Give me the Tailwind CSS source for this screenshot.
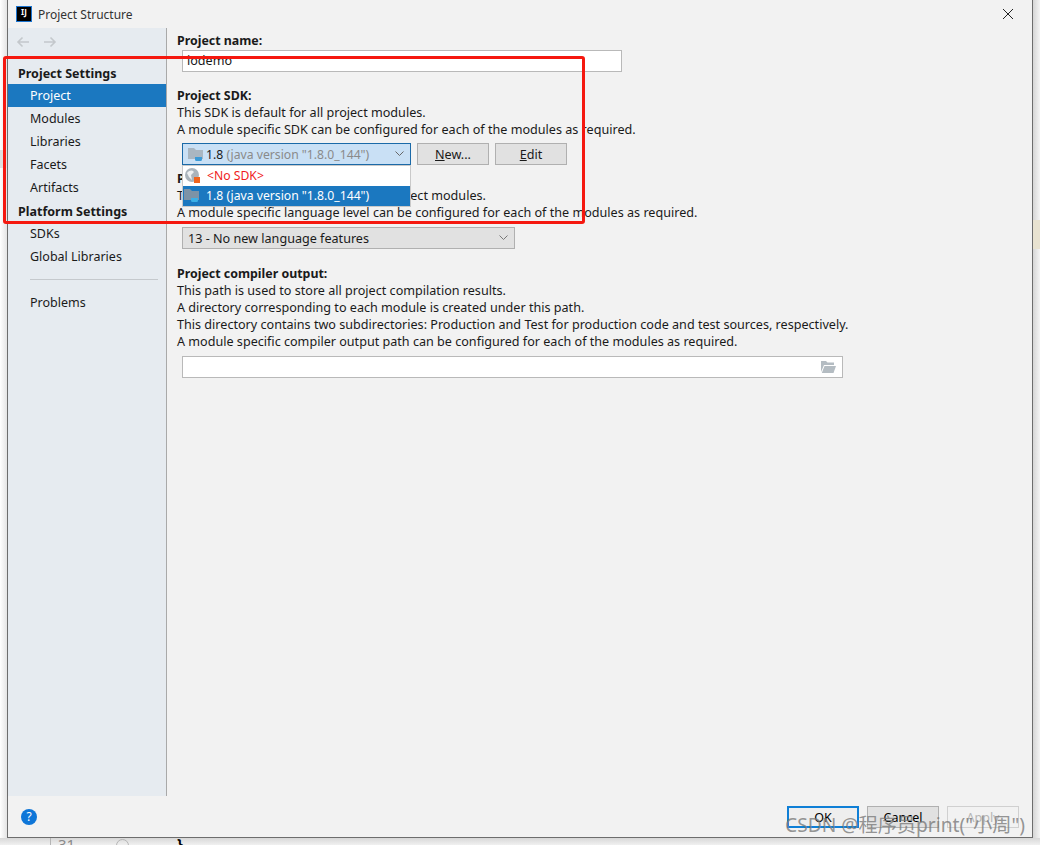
<!DOCTYPE html>
<html lang="en">
<head>
    <meta charset="UTF-8">
    <title>Project Structure</title>
    <script src="https://cdn.jsdelivr.net/npm/@tailwindcss/browser@4"></script>
</head>
<body class="bg-white overflow-hidden">
<div class="relative w-[1040px] h-[845px] overflow-hidden font-['Noto_Sans',sans-serif] text-[12.5px] leading-[17px] text-[#1a1a1a]">
    <!-- shadow strips round the dialog -->
    <div class="absolute left-[1033px] top-0 w-[7px] h-[845px] bg-linear-to-r from-[#d6d6d6] to-[#f4f4f4]"></div>
    <div class="absolute left-[1033px] top-[220px] w-[7px] h-[29px] bg-[#e8e2d0]"></div>
    <div class="absolute left-0 top-0 w-[7px] h-[845px] bg-linear-to-l from-[#e4e4e4] to-white"></div>
    <div class="absolute left-0 top-[150px] w-[7px] h-[18px] bg-[#e0e0e0]"></div>
    <div class="absolute left-0 top-[838px] w-[1040px] h-[7px] bg-linear-to-b from-[#d8d8d8] to-[#f0f0f0]"></div>
    <div class="absolute left-[50px] top-[838px] w-px h-[7px] bg-[#b5b5b5]"></div>
    <div class="absolute left-[58px] top-[836px] text-[#8a8a8a] text-[15px]">31</div>
    <div class="absolute left-[116px] top-[839px] w-[13px] h-[13px] rounded-full border border-[#b5b5b5]"></div>
    <div class="absolute left-[177px] top-[835px] font-bold text-[15px] text-black">}</div>

    <!-- dialog -->
    <div class="absolute left-[7px] top-0 w-[1026px] h-[838px] flex flex-col bg-[#f2f2f2] border-x border-b border-[#6d6d6d]">
        <div class="h-[28px] shrink-0 flex items-center pl-[8px] pr-[18px]">
            <div class="w-4 h-4 bg-black border border-[#1c74d0] flex items-start justify-center">
                <span class="font-bold text-[8px] leading-[10px] text-white">IJ</span>
            </div>
            <span class="ml-[6px] text-[12px] text-[#333]">Project Structure</span>
            <svg class="ml-auto" width="12" height="12" viewBox="0 0 12 12" fill="none" stroke="#222" stroke-width="1"><path d="M1 1l10 10M11 1L1 11"/></svg>
        </div>
        <div class="flex flex-1 min-h-0">
            <!-- sidebar -->
            <aside class="w-[159px] shrink-0 bg-[#e6ebf0] border-r border-[#a9a9a9] flex flex-col">
                <div class="h-[27px] flex items-center pl-[8px] gap-[13px]">
                    <svg width="14" height="12" viewBox="0 0 14 12" fill="none" stroke="#c4c8cc" stroke-width="1.6"><path d="M13 6H2M6.500 1.500L2 6l4.500 4.500"/></svg>
                    <svg width="14" height="12" viewBox="0 0 14 12" fill="none" stroke="#c4c8cc" stroke-width="1.6"><path d="M1 6h11M7.500 1.500L12 6l-4.500 4.500"/></svg>
                </div>
                <div class="h-[29px] pl-[10px] pt-[10px] font-bold">Project Settings</div>
                <div class="h-[23px] pl-[22px] flex items-center bg-[#1b78c0] text-white">Project</div>
                <div class="h-[23px] pl-[22px] flex items-center">Modules</div>
                <div class="h-[23px] pl-[22px] flex items-center">Libraries</div>
                <div class="h-[23px] pl-[22px] flex items-center">Facets</div>
                <div class="h-[23px] pl-[22px] flex items-center">Artifacts</div>
                <div class="h-[23px] pl-[10px] pt-[2px] flex items-center font-bold">Platform Settings</div>
                <div class="h-[23px] pl-[22px] flex items-center">SDKs</div>
                <div class="h-[23px] pl-[22px] flex items-center">Global Libraries</div>
                <div class="mt-[11px] ml-[22px] mr-[8px] h-px bg-[#c5c9cd]"></div>
                <div class="mt-[11px] h-[23px] pl-[22px] flex items-center">Problems</div>
            </aside>
            <!-- main -->
            <main class="flex-1 pl-[10px] pt-[4px] text-[12.6px]">
                <div class="font-bold text-[12.4px]">Project name:</div>
                <div class="mt-[1px] ml-[5px] w-[440px] h-[22px] border border-[#b9b9b9] bg-white pl-[4px] leading-[20px]">iodemo</div>

                <div class="mt-[15px] font-bold text-[12.4px]">Project SDK:</div>
                <div>This SDK is default for all project modules.</div>
                <div>A module specific SDK can be configured for each of the modules as required.</div>
                <div class="mt-[5px] ml-[5px] flex gap-[6px]">
                    <div class="w-[229px] h-[22px] border border-[#1b6aa8] bg-[#c9e0f5] flex items-center pl-[5px] pr-[6px] text-[12.2px]">
                        <svg width="16" height="15" viewBox="0 0 16 15"><path d="M0 1h6l2 2h7v9H0z" fill="#a9b6c1"/><path d="M7 10h7v2.500a1.500 1.500 0 0 1-1.500 1.500h-4A1.500 1.500 0 0 1 7 12.500z" fill="#3c9ad6"/></svg>
                        <span class="ml-[2px]">1.8 <span class="text-[#8a8a8a]">(java version "1.8.0_144")</span></span>
                        <svg class="ml-auto" width="9" height="6" viewBox="0 0 9 6" fill="none" stroke="#666" stroke-width="1"><path d="M.5.5l4 4 4-4"/></svg>
                    </div>
                    <div class="w-[72px] h-[22px] border border-[#b0b0b0] bg-[#e1e1e1] flex items-center justify-center"><span><span class="underline">N</span>ew...</span></div>
                    <div class="w-[72px] h-[22px] border border-[#b0b0b0] bg-[#e1e1e1] flex items-center justify-center"><span><span class="underline">E</span>dit</span></div>
                </div>

                <div class="mt-[5px] font-bold text-[12.4px]">Project language level:</div>
                <div>This language level will be used for project modules.</div>
                <div>A module specific language level can be configured for each of the modules as required.</div>
                <div class="mt-[6px] ml-[5px] w-[333px] h-[22px] border border-[#b0b0b0] bg-[#e1e1e1] flex items-center pl-[5px] pr-[6px]">
                    <span>13 - No new language features</span>
                    <svg class="ml-auto" width="9" height="6" viewBox="0 0 9 6" fill="none" stroke="#777" stroke-width="1"><path d="M.5.5l4 4 4-4"/></svg>
                </div>

                <div class="mt-[16px] font-bold text-[12.4px]">Project compiler output:</div>
                <div>This path is used to store all project compilation results.</div>
                <div>A directory corresponding to each module is created under this path.</div>
                <div>This directory contains two subdirectories: Production and Test for production code and test sources, respectively.</div>
                <div>A module specific compiler output path can be configured for each of the modules as required.</div>
                <div class="mt-[6px] ml-[5px] w-[661px] h-[22px] border border-[#b9b9b9] bg-white flex items-center justify-end pr-[6px]">
                    <svg width="15" height="12" viewBox="0 0 15 12"><path d="M0 0h5l1.500 1.500H13V4H3L0 11z" fill="#b4bcc2"/><path d="M3.500 5H15l-2.500 7H.8z" fill="#b4bcc2"/></svg>
                </div>
            </main>
        </div>
        <!-- footer -->
        <div class="h-[41px] shrink-0 flex items-center pl-[13px] pr-[13px] pt-[1px]">
            <div class="w-4 h-4 rounded-full bg-[#0e76d8] text-white text-[12px] leading-4 text-center">?</div>
            <div class="ml-auto flex gap-[8px]">
                <div class="w-[72px] h-[22px] border-2 border-[#0f7fd6] bg-[#eeeeee] flex items-center justify-center text-black">OK</div>
                <div class="w-[72px] h-[22px] border border-[#b0b0b0] bg-[#e1e1e1] flex items-center justify-center text-black">Cancel</div>
                <div class="w-[72px] h-[22px] border border-[#d0d0d0] flex items-center justify-center text-[#b5b5b5]">Apply</div>
            </div>
        </div>
    </div>

    <!-- opened combo popup -->
    <div class="absolute left-[182px] top-[165px] w-[229px] h-[42px] border border-[#c9c9c9] bg-white text-[12.2px]">
        <div class="h-[20px] flex items-center pl-[1px] pb-[1px]">
            <svg width="17" height="17" viewBox="0 0 17 17"><circle cx="8" cy="8" r="7" fill="#aab4bc"/><path d="M3 6c3-3 5-3 7-1l-3 3 1 5-3-3z" fill="#eef1f3"/><rect x="10" y="10" width="6" height="6" fill="#f0641e"/></svg>
            <span class="ml-[6px] text-[#f01c1c]">&lt;No SDK&gt;</span>
        </div>
        <div class="h-[20px] bg-[#1b78c0] flex items-center pl-[1px] pb-[1px] text-white">
            <svg width="16" height="15" viewBox="0 0 16 15"><path d="M0 1h6l2 2h7v9H0z" fill="#7d93a6"/><path d="M7 10h7v2.500a1.500 1.500 0 0 1-1.500 1.500h-4A1.500 1.500 0 0 1 7 12.500z" fill="#3cb0e6"/></svg>
            <span class="ml-[6px]">1.8 (java version "1.8.0_144")</span>
        </div>
    </div>

    <!-- red annotation box -->
    <div class="absolute left-[3px] top-[56px] w-[582px] h-[168px] border-[3px] border-[#f5180f] rounded-[3px] pointer-events-none"></div>

    <!-- watermark -->
    <div class="absolute left-[785px] top-[812px] text-[19.2px] leading-[26px] text-[#7a7a7a]/80 whitespace-nowrap font-['Noto_Sans','Noto_Sans_CJK_SC',sans-serif]">CSDN @程序员print("小周")</div>
</div>
</body>
</html>
